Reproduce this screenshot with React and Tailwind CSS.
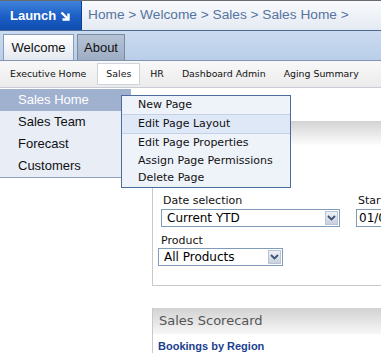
import React from "react";

const subNav = [
  { label: "Executive Home", cls: "ml-[10px]" },
  { label: "Sales", cls: "ml-[11px] w-[43px] h-[22px] bg-white border border-[#cdd4de] justify-center", active: true },
  { label: "HR", cls: "ml-[10px]" },
  { label: "Dashboard Admin", cls: "ml-[18px]" },
  { label: "Aging Summary", cls: "ml-[18px]" },
];

const leftNav = ["Sales Home", "Sales Team", "Forecast", "Customers"];

const menuItems = [
  { label: "New Page", h: "h-[18px]" },
  { label: "Edit Page Layout", h: "h-[20px]", active: true },
  { label: "Edit Page Properties", h: "h-[18px]" },
  { label: "Assign Page Permissions", h: "h-[18px]" },
  { label: "Delete Page", h: "h-[17px]" },
];

const Chevron = () => (
  <svg width="9" height="6" viewBox="0 0 9 6">
    <polyline points="1,1 4.5,4.5 8,1" fill="none" stroke="#3f5277" strokeWidth="1.8" />
  </svg>
);

const FakeSelect = ({ value, width }) => (
  <div className={`${width} h-[18px] border border-[#7f9db9] bg-white flex items-center justify-between`}>
    <span className="pl-[5px] text-[12px] text-black font-['DejaVu_Sans',sans-serif] leading-none">{value}</span>
    <span className="w-[13px] h-[14px] mr-[1px] flex items-center justify-center bg-gradient-to-b from-[#eef1f6] to-[#c9d1de] border border-[#b9c4d6]">
      <Chevron />
    </span>
  </div>
);

export default function App() {
  return (
    <div className="w-[381px] h-[353px] overflow-hidden bg-white relative font-['Liberation_Sans',Arial,sans-serif]">
      {/* top bar */}
      <div className="flex h-[30px] border-t border-[#6b6b6b]">
        <div className="w-[82px] flex items-center pl-[10px] gap-[4px] bg-gradient-to-b from-[#3f82db] via-[#1d61c8] to-[#0f4cae] text-white font-bold text-[13px] border-r border-[#0c3f93]">
          Launch
          <svg width="10" height="10" viewBox="0 0 10 10">
            <line x1="1.5" y1="1.5" x2="8" y2="8" stroke="white" strokeWidth="2.4" />
            <polyline points="8.5,2.5 8.5,8.5 2.5,8.5" fill="none" stroke="white" strokeWidth="2.4" />
          </svg>
        </div>
        <div className="flex-1 flex items-center pl-[6px] bg-gradient-to-b from-[#f8fafd] to-[#e5eaf2] text-[#55749f] text-[13.7px] whitespace-nowrap">
          Home &gt; Welcome &gt; Sales &gt; Sales Home &gt;
        </div>
      </div>

      {/* tabs */}
      <div className="h-[31px] flex items-end pl-[3px] gap-[3px] bg-gradient-to-b from-[#cbdbf0] to-[#b9cee9] border-t border-[#4d6793] border-b border-b-[#8195b2]">
        <div className="w-[71px] h-[26px] flex items-center justify-center border border-b-0 border-[#8c9cb6] bg-gradient-to-b from-[#ffffff] to-[#e4e9f1] text-[13px] text-[#111]">
          Welcome
        </div>
        <div className="w-[48px] h-[26px] flex items-center justify-center border border-b-0 border-[#7b8aa3] bg-gradient-to-b from-[#b6c3d5] to-[#9dadc4] text-[13px] text-[#111]">
          About
        </div>
      </div>

      {/* sub nav */}
      <div className="h-[27px] flex items-center bg-gradient-to-b from-[#f8f8f8] to-[#ebebeb] border-b border-[#c7ccd5] font-['DejaVu_Sans',sans-serif] text-[9.4px] text-[#111] whitespace-nowrap">
        {subNav.map((s) => (
          <div key={s.label} className={`flex items-center ${s.cls}`}>
            {s.label}
          </div>
        ))}
      </div>

      {/* body */}
      <div className="flex items-start pt-[1px]">
        <div className="w-[131px] shrink-0 border-b border-[#8ea2c2]">
          {leftNav.map((item, i) => (
            <div
              key={item}
              className={`h-[22px] flex items-center pl-[18px] text-[13px] ${
                i === 0 ? "bg-[#9fb1cf] text-white" : "bg-[#e8edf6] text-[#111]"
              }`}
            >
              {item}
            </div>
          ))}
        </div>

        <div className="flex-1 pl-[21px] pt-[32px]">
          {/* filter panel */}
          <div>
            <div className="h-[25px] bg-gradient-to-b from-[#d3d3d3] to-white" />
            <div className="h-[140px] border-l border-b border-[#c9c9c9] overflow-hidden">
              <div className="flex pt-[48px]">
                <div className="ml-[8px]">
                  <div className="h-[13px] leading-[13px] text-[11px] text-[#111] font-['DejaVu_Sans',sans-serif] pl-[2px]">Date selection</div>
                  <div className="mt-[2px]">
                    <FakeSelect value="Current YTD" width="w-[179px]" />
                  </div>
                </div>
                <div className="ml-[16px]">
                  <div className="h-[13px] leading-[13px] text-[11px] text-[#111] font-['DejaVu_Sans',sans-serif] pl-[2px]">Start</div>
                  <div className="mt-[2px] w-[40px] h-[18px] border border-[#7f9db9] bg-white flex items-center pl-[2px] text-[12px] font-['DejaVu_Sans',sans-serif]">
                    01/0
                  </div>
                </div>
              </div>
              <div className="ml-[5px] mt-[7px]">
                <div className="h-[13px] leading-[13px] text-[11px] text-[#111] font-['DejaVu_Sans',sans-serif] pl-[3px]">Product</div>
                <div className="mt-[1px]">
                  <FakeSelect value="All Products" width="w-[125px]" />
                </div>
              </div>
            </div>
          </div>

          {/* scorecard panel */}
          <div className="mt-[22px] border-l border-[#c9c9c9]">
            <div className="h-[26px] flex items-center pl-[6px] bg-gradient-to-b from-[#d2d2d2] to-[#f7f7f7] text-[13px] text-[#555] font-['DejaVu_Sans',sans-serif]">
              Sales Scorecard
            </div>
            <div className="pl-[5px] pt-[6px] text-[11px] font-bold text-[#1b3f8f] leading-[13px]">
              Bookings by Region
            </div>
          </div>
        </div>
      </div>

      {/* page menu */}
      <div className="absolute left-[121px] top-[95px] w-[170px] border border-[#4e6b9e] bg-[#eef2f9] font-['DejaVu_Sans',sans-serif] text-[11px] text-[#111]">
        {menuItems.map((m) => (
          <div
            key={m.label}
            className={`${m.h} flex items-center pl-[16px] whitespace-nowrap ${
              m.active ? "bg-[#dfe8f6] border-t border-b border-[#c4d1e6]" : ""
            }`}
          >
            {m.label}
          </div>
        ))}
      </div>
    </div>
  );
}
